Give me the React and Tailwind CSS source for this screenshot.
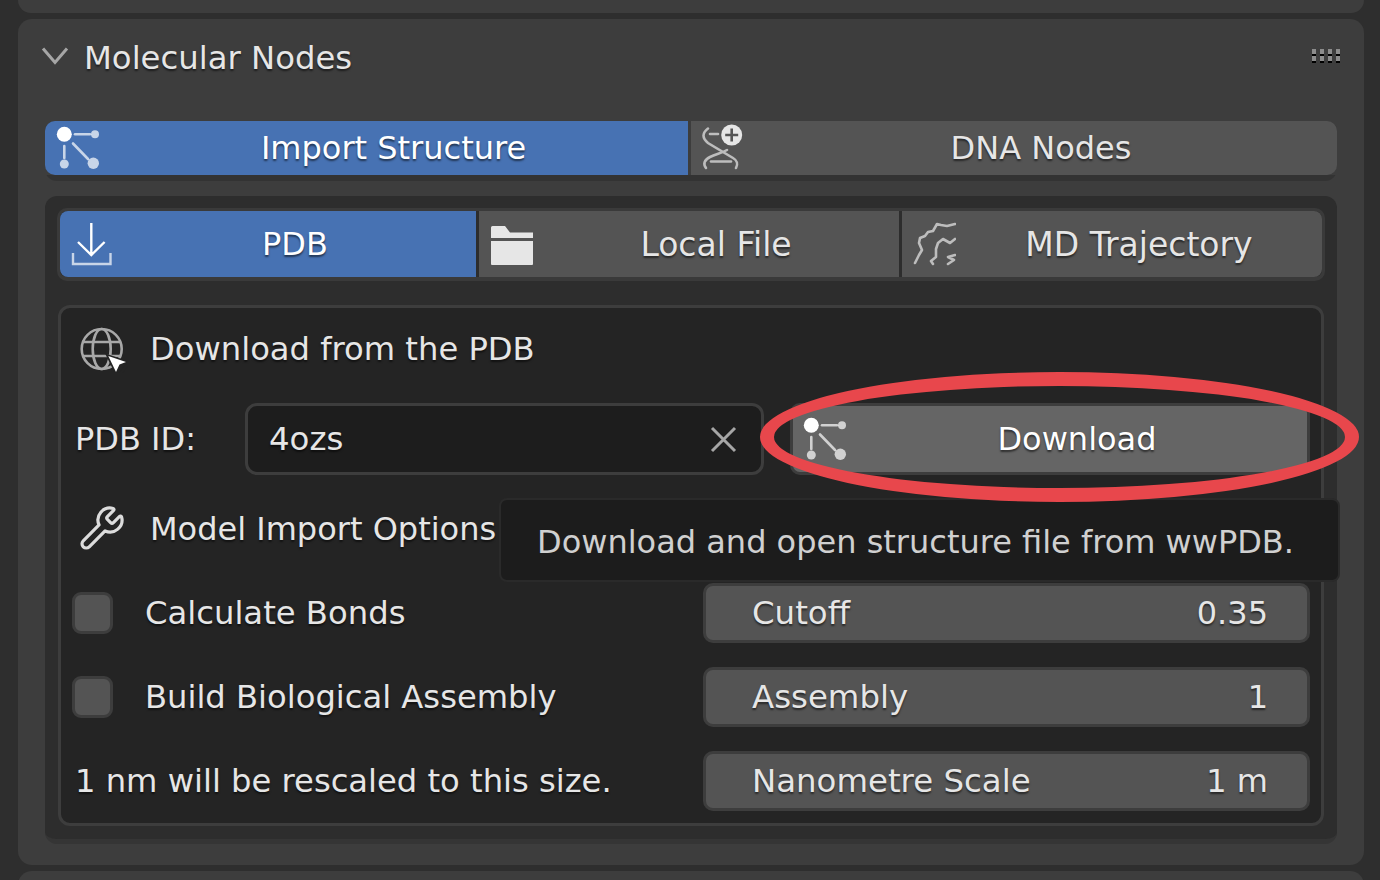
import { Wrench } from "lucide-react";

function NodesIcon({ box }) {
  // drawn in page coords of the first tab, box shifts it for the other button
  return (
    <svg width="54" height="100%" viewBox={box} className="shrink-0 block">
      <g stroke="#ffffff" strokeOpacity="0.7" strokeWidth="2.6" fill="none" strokeLinecap="round">
        <path d="M75 134.3H90" />
        <path d="M64.3 146V158" />
        <path d="M73 143.5L88 159" />
      </g>
      <circle cx="64.3" cy="134.3" r="7.5" fill="#fff" />
      <circle cx="95" cy="134.3" r="4" fill="#fff" fillOpacity="0.7" />
      <circle cx="64.3" cy="164" r="4.5" fill="#fff" fillOpacity="0.7" />
      <circle cx="93.3" cy="163.3" r="5.7" fill="#fff" fillOpacity="0.7" />
    </svg>
  );
}

function DnaIcon() {
  return (
    <svg width="54" height="100%" viewBox="691 121 54 54" className="shrink-0 block">
      <g stroke="#bdbdbd" strokeWidth="2.6" fill="none" strokeLinecap="round">
        <path d="M708 128.5C702 133 702 138 708 143L733 158C738 161 738 164 736 168" />
        <path d="M727 150C722 153 716 154 710 157C704 160 703 164 706 168" />
        <path d="M710 134H718" />
        <path d="M711 161.5H731" />
      </g>
      <circle cx="731.7" cy="135" r="10.5" fill="#e6e6e6" />
      <path d="M731.7 128.5V141.5M725.2 135H738.2" stroke="#545454" strokeWidth="2.6" />
    </svg>
  );
}

function DownloadIcon() {
  return (
    <svg width="54" height="100%" viewBox="60 211 54 66" className="shrink-0 block">
      <path d="M91.3 223V255M78 242L91.3 255L104.6 242" stroke="#fff" strokeWidth="2.4" fill="none" />
      <path d="M73 253V264H110.5V253" stroke="#fff" strokeOpacity="0.7" strokeWidth="2.4" fill="none" />
    </svg>
  );
}

function FolderIcon() {
  return (
    <svg width="54" height="100%" viewBox="479 211 54 66" className="shrink-0 block">
      <path d="M491 227.5Q491 226 492.5 226H505L510 232.5H533V238H491Z" fill="#e6e6e6" />
      <path d="M491 241H533V264Q533 265 532 265H492Q491 265 491 264Z" fill="#e6e6e6" />
    </svg>
  );
}

function TrajectoryIcon() {
  return (
    <svg width="54" height="100%" viewBox="902 211 54 66" className="shrink-0 block">
      <g stroke="#bdbdbd" strokeWidth="2.6" fill="none" strokeLinejoin="round" strokeLinecap="round">
        <path d="M955 224L947 226L941 225L937 224L933 231L928 232L925 236L920 238L919 243L922 250L919 255L915 263" />
        <path d="M955 239L950 243L943 239L938 243L936 249L936 257L931 261L933 264" />
        <path d="M955 255L948 257L954 260L948 264" />
      </g>
    </svg>
  );
}

function GlobeIcon() {
  return (
    <svg width="50" height="50" viewBox="78 323 50 50" className="shrink-0 block">
      <g stroke="#a8a8a8" strokeWidth="2.6" fill="none">
        <circle cx="101.7" cy="349" r="20" />
        <ellipse cx="101.7" cy="349" rx="9" ry="20" />
        <path d="M82 342H121M82 356H121" />
      </g>
      <path d="M108 356L129 363L118 376Z" fill="#242424" stroke="#242424" strokeWidth="3" />
      <path d="M108.3 356L126 362L119.5 364.5L116 372Z" fill="#ffffff" />
    </svg>
  );
}

function MainTab({ active, icon, label }) {
  return (
    <div className={`flex h-[54px] items-center ${active ? "bg-[#4772b3] text-white" : "bg-[#545454] text-[#e6e6e6]"} ${active ? "w-[643px] rounded-l-[10px]" : "flex-1 rounded-r-[10px]"}`}>
      {icon}
      <span className="flex-1 text-center">{label}</span>
    </div>
  );
}

function SubTab({ active, icon, label, className }) {
  return (
    <div className={`flex h-[66px] items-center ${active ? "bg-[#4772b3] text-white" : "bg-[#545454] text-[#e6e6e6]"} ${className}`}>
      {icon}
      <span className="flex-1 text-center">{label}</span>
    </div>
  );
}

function Checkbox() {
  return <div className="w-[41px] h-[42px] shrink-0 rounded-[9px] bg-[#545454] border-[3px] border-[#3d3d3d]"></div>;
}

function NumberField({ label, value }) {
  return (
    <div className="ml-auto flex w-[607px] h-[60px] items-center justify-between rounded-[10px] border-[3px] border-[#3d3d3d] bg-[#545454] pl-[46px] pr-[39px] text-[#e6e6e6]">
      <span className="text-[32.4px]">{label}</span>
      <span>{value}</span>
    </div>
  );
}

function OptionRow({ children, field }) {
  return (
    <div className="flex h-[60px] items-center pr-[11px] mt-[24px]">
      {children}
      {field}
    </div>
  );
}

export default function App() {
  return (
    <div className="relative w-[1380px] h-[880px] overflow-hidden bg-[#2e2e2e] font-['DejaVu_Sans',sans-serif] text-[32px] leading-none text-[#e6e6e6] [text-shadow:0_2px_2px_rgba(0,0,0,0.55)]">
      <div className="ml-[18px] mr-[16px] flex flex-col gap-[6px]">
        <div className="h-[13px] rounded-b-[14px] bg-[#3d3d3d]"></div>

        {/* MOLECULAR NODES PANEL */}
        <div className="h-[846px] rounded-[14px] bg-[#3d3d3d] px-[27px]">
          <div className="flex h-[102px] items-start pt-[21px]">
            <svg width="30" height="34" viewBox="40 40 30 34" className="shrink-0 -ml-[5px] block">
              <path d="M43 48.5L55 62.5L67 48.5" stroke="#a6a6a6" strokeWidth="3" fill="none" />
            </svg>
            <span className="ml-[14px] h-[34px] leading-[36px] text-[32.3px]">Molecular Nodes</span>
            <svg width="28" height="14" viewBox="0 0 28 14" className="ml-auto -mr-[3px] mt-[9px] block">
              {[0, 8, 16, 24].map((x) => (
                <g key={x}>
                  <rect x={x} y="0" width="4" height="5" fill="#8c8c8c" />
                  <rect x={x} y="5" width="4" height="2" fill="#000" />
                  <rect x={x} y="7" width="4" height="5" fill="#8c8c8c" />
                  <rect x={x} y="12" width="4" height="2" fill="#000" />
                </g>
              ))}
            </svg>
          </div>

          {/* main tabs */}
          <div className="rounded-[12px] bg-[#333333] pb-[6px]">
            <div className="flex gap-[3px] bg-[#3d3d3d] rounded-t-[10px]">
              <MainTab active icon={<NodesIcon box="45 121 54 54" />} label="Import Structure" />
              <MainTab icon={<DnaIcon />} label="DNA Nodes" />
            </div>
          </div>

          {/* dark box */}
          <div className="mt-[15px] h-[648px] rounded-[12px] bg-[#2d2d2d] px-[12px] pt-[12px] border-b-[5px] border-[#353535]">
            <div className="flex gap-[3px] rounded-[10px] border-[3px] border-[#3a3a3a] border-b-[4px]">
              <SubTab active icon={<DownloadIcon />} label="PDB" className="w-[416px] rounded-l-[8px]" />
              <SubTab icon={<FolderIcon />} label="Local File" className="w-[420px] text-[33px]" />
              <SubTab icon={<TrajectoryIcon />} label="MD Trajectory" className="flex-1 rounded-r-[8px] text-[33px]" />
            </div>

            {/* download box */}
            <div className="mx-[1px] mt-[24px] h-[521px] rounded-[12px] border-[3px] border-[#3d3d3d] bg-[#242424] pt-[12px]">
              <div className="flex h-[56px] items-center pl-[17px]">
                <GlobeIcon />
                <span className="ml-[22px] mt-[2px] text-[32.2px]">Download from the PDB</span>
              </div>

              <div className="mt-[28px] flex h-[70px] items-center pl-[14px]">
                <span className="w-[170px] shrink-0">PDB ID:</span>
                <div className="flex h-[72px] w-[519px] shrink-0 items-center justify-between rounded-[12px] border-[3px] border-[#3d3d3d] bg-[#1d1d1d] pl-[21px] pr-[24px]">
                  <span className="text-[32.4px]">4ozs</span>
                  <svg width="27" height="27" viewBox="0 0 27 27" className="block">
                    <path d="M2 2L25 25M25 2L2 25" stroke="#a6a6a6" strokeWidth="3" />
                  </svg>
                </div>
                <div className="ml-[26px] flex h-[72px] w-[520px] shrink-0 items-center rounded-[10px] border-[3px] border-[#3d3d3d] bg-[#656565] text-white">
                  <NodesIcon box="46 115 54 66" />
                  <span className="flex-1 text-center">Download</span>
                </div>
              </div>

              <div className="mt-[26px] flex h-[56px] items-center pl-[17px]">
                <Wrench size={48} strokeWidth={1.6} color="#dcdcdc" className="shrink-0 -scale-x-100 rotate-90" />
                <span className="ml-[24px] mt-[2px]">Model Import Options</span>
              </div>

              <div className="pl-[11px] pt-[3px]">
                <OptionRow field={<NumberField label="Cutoff" value="0.35" />}>
                  <Checkbox />
                  <span className="ml-[32px] text-[32.25px]">Calculate Bonds</span>
                </OptionRow>
                <OptionRow field={<NumberField label="Assembly" value="1" />}>
                  <Checkbox />
                  <span className="ml-[32px] text-[32.2px]">Build Biological Assembly</span>
                </OptionRow>
                <OptionRow field={<NumberField label="Nanometre Scale" value="1 m" />}>
                  <span className="ml-[3px] text-[32.2px]">1 nm will be rescaled to this size.</span>
                </OptionRow>
              </div>
            </div>
          </div>
        </div>

        <div className="h-[20px] rounded-t-[14px] bg-[#3d3d3d]"></div>
      </div>

      {/* tooltip */}
      <div className="absolute left-[499px] top-[498px] flex h-[84px] w-[841px] items-center rounded-[8px] border-[2px] border-[#2a2a2a] bg-[#1c1c1c] pl-[36px] pt-[4px] text-[#d0d0d0] [text-shadow:none]">
        Download and open structure file from wwPDB.
      </div>

      {/* annotation */}
      <div className="absolute left-[760px] top-[372px] h-[130px] w-[599px] rounded-[50%] border-[14px] border-[#e8474c]"></div>
    </div>
  );
}
